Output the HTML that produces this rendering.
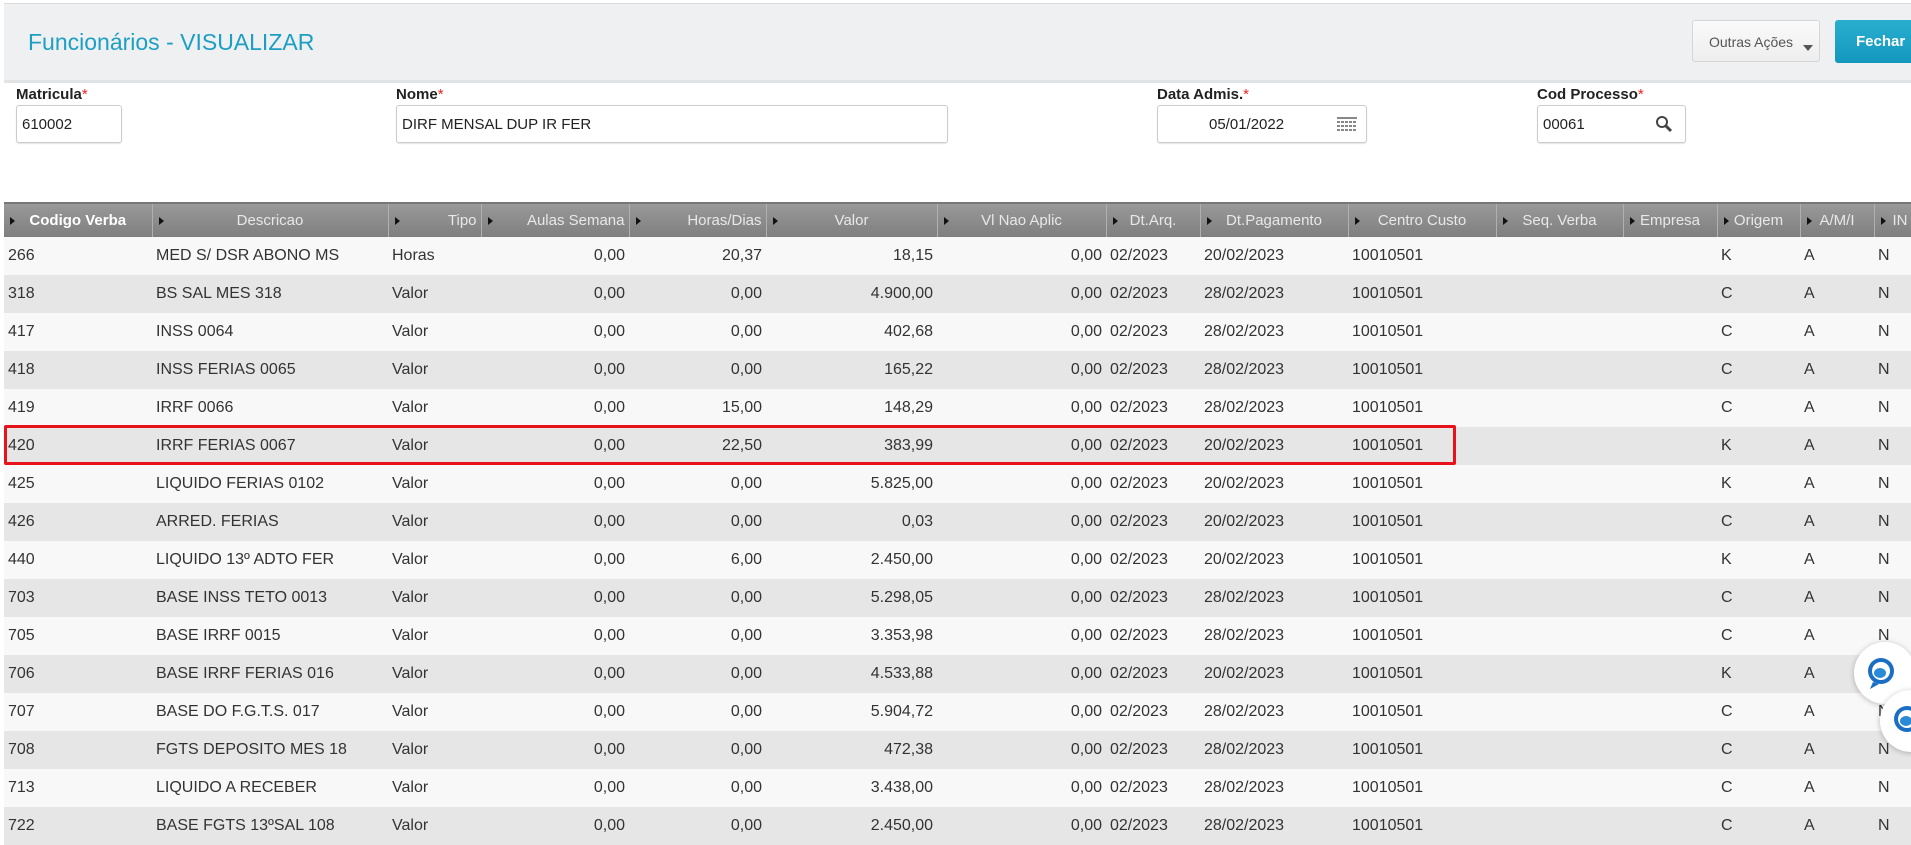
<!DOCTYPE html>
<html><head><meta charset="utf-8"><style>
body{margin:0;width:1911px;height:840px;overflow:hidden;background:#fff;font-family:"Liberation Sans",Arial,sans-serif;position:relative}
.hdr{position:absolute;left:4px;top:3px;width:1907px;height:76px;background:#eff0f1;border-bottom:3px solid #e2e3e4;border-top:1px solid #dcdcdc}
.title{position:absolute;left:24px;top:25px;font-size:23px;color:#1c9fc3}
.btn1{position:absolute;left:1692px;top:20px;width:128px;height:42px;border:1px solid #d6d6d6;border-radius:3px;background:linear-gradient(#fafafa,#eeeeee);font-size:14px;color:#555;box-sizing:border-box;padding:13px 0 0 16px}
.btn1:after{content:"";position:absolute;right:6px;bottom:10px;border-left:5px solid transparent;border-right:5px solid transparent;border-top:6px solid #555}
.btn2{position:absolute;left:1835px;top:20px;width:90px;height:43px;border-radius:3px;background:linear-gradient(#29aed0,#1497bd);color:#fff;font-weight:bold;font-size:15px;box-sizing:border-box;padding:13px 0 0 21px}
.lbl{position:absolute;top:86px;font-size:15px;font-weight:bold;color:#222}
.lbl i{color:#e22;font-style:normal;font-weight:normal}
.inp{position:absolute;top:105px;height:38px;border:1px solid #ccc;border-radius:3px;box-sizing:border-box;font-size:15px;color:#222;padding:10px 0 0 5px;box-shadow:0 1px 1px #e4e4e4}
table{position:absolute;left:4px;top:202px;width:1930px;border-collapse:collapse;table-layout:fixed;font-size:16px;color:#333}
th{height:33px;background:linear-gradient(#999,#7f7f7f);color:#e8e8e8;font-weight:normal;font-size:15px;border-right:1px solid #b0b0b0;border-top:2px solid #777;padding:0 4px;text-align:center;position:relative;white-space:nowrap;overflow:hidden}
th:before{content:"";position:absolute;left:6px;top:13px;border-top:4px solid transparent;border-bottom:4px solid transparent;border-left:5px solid #111}
td{height:38px;padding:0 4px;white-space:nowrap;overflow:hidden}
tr.o td{background:#f8f8f8}tr.e td{background:#e6e6e6}
.r{text-align:right}
.red{position:absolute;left:4px;top:425px;width:1452px;height:40px;border:3px solid #e8121a;box-sizing:border-box;border-radius:2px}
.chat{position:absolute;width:62px;height:62px;border-radius:50%;background:#fff;box-shadow:0 1px 6px rgba(0,0,0,.25)}
</style></head><body>
<div class="hdr"><div class="title">Funcionários - VISUALIZAR</div></div>
<div class="btn1">Outras Ações</div>
<div class="btn2">Fechar</div>
<div class="lbl" style="left:16px">Matricula<i>*</i></div>
<div class="lbl" style="left:396px">Nome<i>*</i></div>
<div class="lbl" style="left:1157px">Data Admis.<i>*</i></div>
<div class="lbl" style="left:1537px">Cod Processo<i>*</i></div>
<div class="inp" style="left:16px;width:106px">610002</div>
<div class="inp" style="left:396px;width:552px">DIRF MENSAL DUP IR FER</div>
<div class="inp" style="left:1157px;width:210px;padding-left:51px">05/01/2022
<svg style="position:absolute;right:9px;top:11px" width="20" height="16"><g fill="#888"><rect x="0" y="0" width="20" height="2"/><rect x="0" y="4" width="3" height="2"/><rect x="4" y="4" width="3" height="2"/><rect x="8" y="4" width="3" height="2"/><rect x="12" y="4" width="3" height="2"/><rect x="16" y="4" width="3" height="2"/><rect x="0" y="8" width="3" height="2"/><rect x="4" y="8" width="3" height="2"/><rect x="8" y="8" width="3" height="2"/><rect x="12" y="8" width="3" height="2"/><rect x="16" y="8" width="3" height="2"/><rect x="0" y="12" width="3" height="2"/><rect x="4" y="12" width="3" height="2"/><rect x="8" y="12" width="3" height="2"/><rect x="12" y="12" width="3" height="2"/><rect x="16" y="12" width="3" height="2"/></g></svg></div>
<div class="inp" style="left:1537px;width:149px">00061
<svg style="position:absolute;right:12px;top:9px" width="18" height="18"><circle cx="7" cy="7" r="5" fill="none" stroke="#444" stroke-width="2"/><path d="M10.5 10.5L16 16" stroke="#444" stroke-width="3"/></svg></div>
<table>
<colgroup><col style="width:148px"><col style="width:236px"><col style="width:93px"><col style="width:148px"><col style="width:137px"><col style="width:171px"><col style="width:169px"><col style="width:94px"><col style="width:148px"><col style="width:148px"><col style="width:127px"><col style="width:94px"><col style="width:83px"><col style="width:74px"><col style="width:60px"></colgroup>
<tr><th style="color:#fff;font-weight:bold">Codigo Verba</th><th>Descricao</th><th style="text-align:right">Tipo</th><th style="text-align:right">Aulas Semana</th><th style="text-align:right">Horas/Dias</th><th>Valor</th><th>Vl Nao Aplic</th><th>Dt.Arq.</th><th>Dt.Pagamento</th><th>Centro Custo</th><th>Seq. Verba</th><th>Empresa</th><th>Origem</th><th>A/M/I</th><th style="text-align:left;padding-left:18px">IN</th></tr>
<tr class="o"><td>266</td><td>MED S/ DSR ABONO MS</td><td>Horas</td><td class="r">0,00</td><td class="r">20,37</td><td class="r">18,15</td><td class="r">0,00</td><td>02/2023</td><td>20/02/2023</td><td>10010501</td><td></td><td></td><td>K</td><td>A</td><td>N</td></tr>
<tr class="e"><td>318</td><td>BS SAL MES 318</td><td>Valor</td><td class="r">0,00</td><td class="r">0,00</td><td class="r">4.900,00</td><td class="r">0,00</td><td>02/2023</td><td>28/02/2023</td><td>10010501</td><td></td><td></td><td>C</td><td>A</td><td>N</td></tr>
<tr class="o"><td>417</td><td>INSS 0064</td><td>Valor</td><td class="r">0,00</td><td class="r">0,00</td><td class="r">402,68</td><td class="r">0,00</td><td>02/2023</td><td>28/02/2023</td><td>10010501</td><td></td><td></td><td>C</td><td>A</td><td>N</td></tr>
<tr class="e"><td>418</td><td>INSS FERIAS 0065</td><td>Valor</td><td class="r">0,00</td><td class="r">0,00</td><td class="r">165,22</td><td class="r">0,00</td><td>02/2023</td><td>28/02/2023</td><td>10010501</td><td></td><td></td><td>C</td><td>A</td><td>N</td></tr>
<tr class="o"><td>419</td><td>IRRF 0066</td><td>Valor</td><td class="r">0,00</td><td class="r">15,00</td><td class="r">148,29</td><td class="r">0,00</td><td>02/2023</td><td>28/02/2023</td><td>10010501</td><td></td><td></td><td>C</td><td>A</td><td>N</td></tr>
<tr class="e"><td>420</td><td>IRRF FERIAS 0067</td><td>Valor</td><td class="r">0,00</td><td class="r">22,50</td><td class="r">383,99</td><td class="r">0,00</td><td>02/2023</td><td>20/02/2023</td><td>10010501</td><td></td><td></td><td>K</td><td>A</td><td>N</td></tr>
<tr class="o"><td>425</td><td>LIQUIDO FERIAS 0102</td><td>Valor</td><td class="r">0,00</td><td class="r">0,00</td><td class="r">5.825,00</td><td class="r">0,00</td><td>02/2023</td><td>20/02/2023</td><td>10010501</td><td></td><td></td><td>K</td><td>A</td><td>N</td></tr>
<tr class="e"><td>426</td><td>ARRED. FERIAS</td><td>Valor</td><td class="r">0,00</td><td class="r">0,00</td><td class="r">0,03</td><td class="r">0,00</td><td>02/2023</td><td>20/02/2023</td><td>10010501</td><td></td><td></td><td>C</td><td>A</td><td>N</td></tr>
<tr class="o"><td>440</td><td>LIQUIDO 13º ADTO FER</td><td>Valor</td><td class="r">0,00</td><td class="r">6,00</td><td class="r">2.450,00</td><td class="r">0,00</td><td>02/2023</td><td>20/02/2023</td><td>10010501</td><td></td><td></td><td>K</td><td>A</td><td>N</td></tr>
<tr class="e"><td>703</td><td>BASE INSS TETO 0013</td><td>Valor</td><td class="r">0,00</td><td class="r">0,00</td><td class="r">5.298,05</td><td class="r">0,00</td><td>02/2023</td><td>28/02/2023</td><td>10010501</td><td></td><td></td><td>C</td><td>A</td><td>N</td></tr>
<tr class="o"><td>705</td><td>BASE IRRF 0015</td><td>Valor</td><td class="r">0,00</td><td class="r">0,00</td><td class="r">3.353,98</td><td class="r">0,00</td><td>02/2023</td><td>28/02/2023</td><td>10010501</td><td></td><td></td><td>C</td><td>A</td><td>N</td></tr>
<tr class="e"><td>706</td><td>BASE IRRF FERIAS 016</td><td>Valor</td><td class="r">0,00</td><td class="r">0,00</td><td class="r">4.533,88</td><td class="r">0,00</td><td>02/2023</td><td>20/02/2023</td><td>10010501</td><td></td><td></td><td>K</td><td>A</td><td>N</td></tr>
<tr class="o"><td>707</td><td>BASE DO F.G.T.S. 017</td><td>Valor</td><td class="r">0,00</td><td class="r">0,00</td><td class="r">5.904,72</td><td class="r">0,00</td><td>02/2023</td><td>28/02/2023</td><td>10010501</td><td></td><td></td><td>C</td><td>A</td><td>N</td></tr>
<tr class="e"><td>708</td><td>FGTS DEPOSITO MES 18</td><td>Valor</td><td class="r">0,00</td><td class="r">0,00</td><td class="r">472,38</td><td class="r">0,00</td><td>02/2023</td><td>28/02/2023</td><td>10010501</td><td></td><td></td><td>C</td><td>A</td><td>N</td></tr>
<tr class="o"><td>713</td><td>LIQUIDO A RECEBER</td><td>Valor</td><td class="r">0,00</td><td class="r">0,00</td><td class="r">3.438,00</td><td class="r">0,00</td><td>02/2023</td><td>28/02/2023</td><td>10010501</td><td></td><td></td><td>C</td><td>A</td><td>N</td></tr>
<tr class="e"><td>722</td><td>BASE FGTS 13ºSAL 108</td><td>Valor</td><td class="r">0,00</td><td class="r">0,00</td><td class="r">2.450,00</td><td class="r">0,00</td><td>02/2023</td><td>28/02/2023</td><td>10010501</td><td></td><td></td><td>C</td><td>A</td><td>N</td></tr>
</table>
<div class="red"></div>
<div class="chat" style="left:1854px;top:642px"><svg width="62" height="62"><circle cx="27" cy="29" r="13" fill="#1a6fc4"/><circle cx="27" cy="29" r="9" fill="#fff"/><ellipse cx="26" cy="31" rx="6" ry="5" fill="#2a8ad8"/><path d="M19 40 L16 47 L25 42" fill="#1a6fc4"/></svg></div>
<div class="chat" style="left:1880px;top:690px"><svg width="62" height="62"><circle cx="27" cy="29" r="13" fill="#1a6fc4"/><circle cx="27" cy="29" r="9" fill="#fff"/><ellipse cx="26" cy="31" rx="6" ry="5" fill="#2a8ad8"/></svg></div>
</body></html>
